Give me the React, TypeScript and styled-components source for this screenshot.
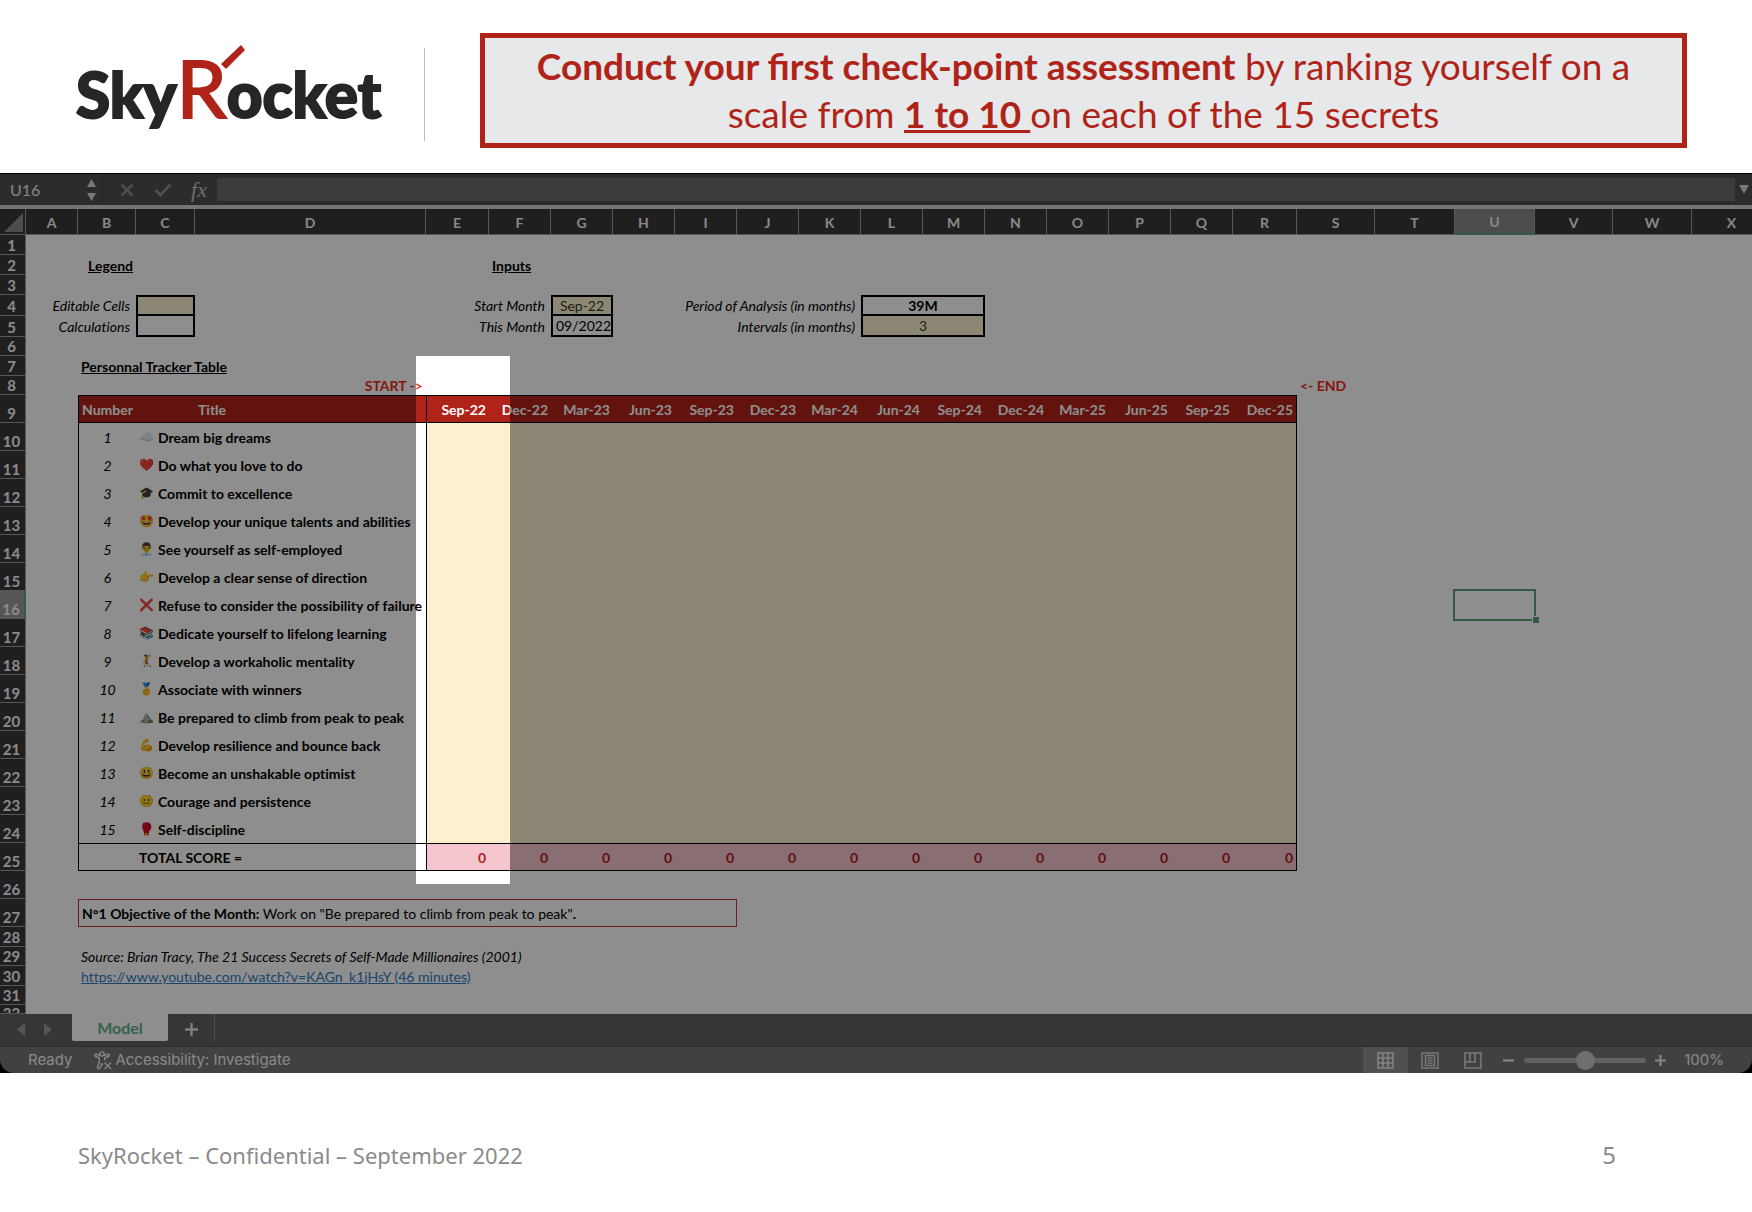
import React from "react";
import styled, { createGlobalStyle, css } from "styled-components";

const color = {
  brand: "#b02318",
  ink: "#262626",
  cream: "#fcf0d0",
  pink: "#f6c6cf",
  alert: "#f0281e",
  gutter: "#383838",
  rule: "#9c9c9c",
  green: "#5f9f7b",
  chrome: "#4f4f4f",
};

const calibri = `Lato, Carlito, "Noto Sans", sans-serif`;
const system = `Inter, "Liberation Sans", sans-serif`;

const GlobalStyle = createGlobalStyle`
  *, *::before, *::after { box-sizing: border-box; }
  body { margin: 0; background: #fff; font-family: ${calibri}; color: #000; }
  button, input { font: inherit; color: inherit; }
  button { border: 0; padding: 0; background: none; cursor: pointer; }
`;

/* ---------- slide header ---------- */

const SlideHeader = styled.header`
  display: flex;
  align-items: center;
  padding: 33px 65px 25px 76px;
`;

const Logo = styled.div`
  position: relative;
  display: flex;
  align-items: baseline;
  flex: none;
  width: 300px;
  font-size: 62px;
  line-height: 86px;
  font-weight: 900;
  color: ${color.ink};
  -webkit-text-stroke: 2px ${color.ink};
`;

const LogoInitial = styled.span`
  font-size: 80px;
  font-weight: 400;
  color: ${color.brand};
  -webkit-text-stroke: 2px ${color.brand};
`;

const Spark = styled.svg`
  position: absolute;
  left: 144px;
  top: 0;
`;

const Divider = styled.div`
  flex: none;
  width: 1px;
  height: 93px;
  margin: 8px 55px 0 48px;
  background: #bdbdbd;
`;

const Callout = styled.h1`
  flex: 1;
  margin: 0;
  padding: 4px 30px 5px;
  border: 5px solid ${color.brand};
  background: #e6e8ea;
  color: ${color.brand};
  font-size: 37px;
  line-height: 48px;
  font-weight: 400;
  text-align: center;
`;

/* ---------- workbook chrome ---------- */

const Workbook = styled.main`
  position: relative;
  overflow: hidden;
  background: #000;
  border-top: 1px solid #000;
`;

const Spotlight = styled.div`
  position: absolute;
  top: 182px;
  left: 416px;
  width: 94px;
  height: 528px;
  box-shadow: 0 0 0 4000px rgba(0, 0, 0, 0.443);
  pointer-events: none;
`;

const FormulaBar = styled.div`
  display: flex;
  align-items: center;
  height: 31px;
  background: ${color.chrome};
  color: #f0f0f0;
`;

const NameBox = styled.input`
  width: 72px;
  height: 24px;
  padding: 0 0 0 10px;
  border: 0;
  background: none;
  font-size: 16px;
  outline: none;
`;

const Stepper = styled.div`
  display: grid;
  gap: 6px;
  width: 30px;
  justify-items: center;
  padding-left: 8px;
`;

const IconButton = styled.button<{ $width?: number }>`
  display: flex;
  align-items: center;
  justify-content: center;
  width: ${(p) => p.$width ?? 36}px;
`;

const BarTools = styled.div`
  display: flex;
  align-items: center;
  height: 31px;
  padding-left: 6px;
  border-left: 1px solid #404040;
`;

const FxButton = styled(IconButton)`
  font-family: "Liberation Serif", serif;
  font-style: italic;
  font-size: 22px;
  line-height: 24px;
  color: #c4c4c4;
`;

const FormulaInput = styled.input`
  flex: 1;
  min-width: 0;
  height: 23px;
  border: 0;
  border-radius: 3px 0 0 3px;
  background: #6c6c6c;
  outline: none;
`;

/* ---------- grid ---------- */

const GridFrame = styled.div`
  overflow: hidden;
  border-top: 4px solid #d0d0d0;
  background: #fff;
`;

const Grid = styled.table`
  width: calc(100% + 20px);
  table-layout: fixed;
  border-collapse: separate;
  border-spacing: 0;
  font-size: 14px;
  line-height: 17px;
  font-variant-ligatures: none;
`;

const ColHead = styled.th<{ $active?: boolean }>`
  height: 26px;
  padding: 1px 0 0;
  background: ${(p) => (p.$active ? "#8a8a8a" : color.gutter)};
  border-right: 1px solid ${color.rule};
  border-bottom: ${(p) => (p.$active ? `2px solid ${color.green}` : `1px solid ${color.rule}`)};
  color: #f4f4f4;
  font-weight: 700;
`;

const Corner = styled.td`
  padding: 0 2px 2px 4px;
  background: ${color.gutter};
  border-right: 1px solid ${color.rule};
  border-bottom: 1px solid ${color.rule};
  vertical-align: bottom;
  svg { display: block; }
`;

const RowHead = styled.th<{ $active?: boolean }>`
  padding: 0 2px 0 0;
  background: ${(p) => (p.$active ? "#9a9a9a" : color.gutter)};
  border-right: ${(p) => (p.$active ? `2px solid ${color.green}` : `1px solid ${color.rule}`)};
  border-bottom: 1px solid ${color.rule};
  color: #f8f8f8;
  font-size: 15px;
  font-weight: 700;
  vertical-align: bottom;
`;

const Clip = styled.div<{ $height: number }>`
  height: ${(p) => p.$height - 1}px;
  overflow: hidden;
  display: flex;
  align-items: ${(p) => (p.$height < 18 ? "flex-start" : "flex-end")};
  justify-content: center;
`;

type Look =
  | "plain" | "heading" | "label" | "editable" | "calc" | "marker" | "band"
  | "number" | "title" | "score" | "totalLabel" | "total" | "objective" | "selected";

const looks: Record<Look, ReturnType<typeof css>> = {
  plain: css``,
  heading: css`font-weight: 700; text-decoration: underline;`,
  label: css`font-style: italic; padding-right: 6px;`,
  editable: css`background: ${color.cream}; border: 2px solid #000; color: #3a3a20;`,
  calc: css`border: 2px solid #000;`,
  marker: css`font-weight: 700; color: ${color.alert};`,
  band: css`
    background: ${color.brand};
    color: #fff;
    font-weight: 700;
    border-top: 1px solid #000;
    border-bottom: 1px solid #000;
  `,
  number: css`font-style: italic;`,
  title: css`font-weight: 700;`,
  score: css`background: ${color.cream};`,
  totalLabel: css`font-weight: 700; border-top: 1px solid #000; border-bottom: 1px solid #000;`,
  total: css`
    background: ${color.pink};
    color: ${color.brand};
    font-weight: 700;
    border-top: 1px solid #000;
    border-bottom: 1px solid #000;
  `,
  objective: css`border: 1px solid #c8323c;`,
  selected: css`
    position: relative;
    &::before {
      content: "";
      position: absolute;
      inset: -2px -1px -2px -2px;
      border: 2px solid ${color.green};
    }
    &::after {
      content: "";
      position: absolute;
      right: -4px;
      bottom: -4px;
      width: 6px;
      height: 6px;
      background: ${color.green};
      outline: 1px solid #fff;
    }
  `,
};

const Cell = styled.td<{ $look: Look; $align?: string; $left?: boolean; $right?: boolean; $joined?: boolean }>`
  padding: 0 3px;
  text-align: ${(p) => p.$align ?? "left"};
  white-space: nowrap;
  ${(p) => looks[p.$look]}
  ${(p) => p.$left && css`border-left: 1px solid #000;`}
  ${(p) => p.$right && css`border-right: 1px solid #000;`}
  ${(p) => p.$joined && css`border-top: 0;`}
`;

const Emoji = styled.span`
  display: inline-block;
  width: 19px;
  font-family: "Noto Color Emoji", sans-serif;
  font-size: 12px;
  line-height: 14px;
  font-weight: 400;
  vertical-align: 2px;
`;

const SourceLink = styled.a`
  color: #2f7cc4;
`;

/* ---------- sheet tabs and status bar ---------- */

const TabBar = styled.div`
  display: flex;
  align-items: flex-start;
  height: 32px;
  padding-left: 7px;
  background: #616161;
  color: #d0d0d0;
`;

const TabTool = styled(IconButton)`
  height: 30px;
`;

const SheetTab = styled.button`
  width: 96px;
  height: 27px;
  margin-left: 11px;
  background: #fff;
  border-radius: 0 0 2px 2px;
  color: #62b181;
  font-size: 16px;
  font-weight: 700;
`;

const TabEnd = styled.div`
  width: 1px;
  height: 27px;
  background: #8e8e8e;
`;

const StatusBar = styled.div`
  display: flex;
  align-items: center;
  height: 27px;
  padding: 0 28px;
  border-top: 1px solid #505050;
  border-radius: 0 0 14px 14px;
  background: #767676;
  color: #f4f4f4;
  font-family: ${system};
  font-size: 15px;
  line-height: 24px;
`;

const Accessibility = styled.button`
  display: flex;
  align-items: center;
  gap: 2px;
  margin-left: 22px;
`;

const StatusTools = styled.div`
  display: flex;
  align-items: center;
  margin-left: auto;
`;

const ViewButton = styled(IconButton)<{ $active?: boolean }>`
  height: 26px;
  background: ${(p) => (p.$active ? "#919191" : "none")};
`;

const ZoomSlider = styled.input`
  appearance: none;
  width: 122px;
  height: 20px;
  margin: 0 2px;
  background: none;
  &::-webkit-slider-runnable-track {
    height: 5px;
    border-radius: 3px;
    background: #aeaeae;
  }
  &::-webkit-slider-thumb {
    appearance: none;
    width: 19px;
    height: 19px;
    margin-top: -7px;
    border-radius: 50%;
    background: #c8c8c8;
  }
`;

const ZoomValue = styled.output`
  width: 52px;
  font-size: 15px;
  text-align: right;
`;

const SlideFooter = styled.footer`
  display: flex;
  justify-content: space-between;
  align-items: center;
  padding: 65px 136px 36px 78px;
  font-family: "Noto Sans", "Open Sans", sans-serif;
  font-size: 22px;
  line-height: 34px;
  color: #8a8a8a;
`;

const PageNumber = styled.span`
  font-size: 24px;
`;

/* ---------- data ---------- */

const columns = "ABCDEFGHIJKLMNOPQRSTUVWX".split("");
const columnWidths = [
  52, 58, 59, 231, 63, 62, 62, 62, 62, 62, 62, 62, 62, 62, 62, 62, 62, 64, 78, 80, 80, 78, 79,
];

const secrets: [string, string][] = [
  ["☁️", "Dream big dreams"],
  ["❤️", "Do what you love to do"],
  ["🎓", "Commit to excellence"],
  ["🤩", "Develop your unique talents and abilities"],
  ["👨‍💼", "See yourself as self-employed"],
  ["👉", "Develop a clear sense of direction"],
  ["❌", "Refuse to consider the possibility of failure"],
  ["📚", "Dedicate yourself to lifelong learning"],
  ["🤾", "Develop a workaholic mentality"],
  ["🥇", "Associate with winners"],
  ["⛰️", "Be prepared to climb from peak to peak"],
  ["💪", "Develop resilience and bounce back"],
  ["😃", "Become an unshakable optimist"],
  ["😐", "Courage and persistence"],
  ["🥊", "Self-discipline"],
];

const months = [
  "Sep-22", "Dec-22", "Mar-23", "Jun-23", "Sep-23", "Dec-23", "Mar-24",
  "Jun-24", "Sep-24", "Dec-24", "Mar-25", "Jun-25", "Sep-25", "Dec-25",
];

type CellSpec = {
  at: string;
  span?: number;
  look?: Look;
  align?: string;
  left?: boolean;
  right?: boolean;
  joined?: boolean;
  body?: React.ReactNode;
};

const monthCells = (look: Look, value: (i: number) => React.ReactNode): CellSpec[] =>
  months.map((_, i) => ({
    at: columns[4 + i],
    look,
    align: "right",
    left: i === 0,
    right: i === months.length - 1,
    body: value(i),
  }));

type RowSpec = { height: number; cells?: CellSpec[] };

const rows: RowSpec[] = [
  { height: 20 },
  {
    height: 20,
    cells: [
      { at: "B", look: "heading", align: "right", body: "Legend" },
      { at: "F", look: "heading", body: "Inputs" },
    ],
  },
  { height: 20 },
  {
    height: 21,
    cells: [
      { at: "A", span: 2, look: "label", align: "right", body: "Editable Cells" },
      { at: "C", look: "editable" },
      { at: "E", span: 2, look: "label", align: "right", body: "Start Month" },
      { at: "G", look: "editable", align: "center", body: "Sep-22" },
      { at: "H", span: 4, look: "label", align: "right", body: "Period of Analysis (in months)" },
      { at: "L", span: 2, look: "calc", align: "center", body: <strong>39M</strong> },
    ],
  },
  {
    height: 21,
    cells: [
      { at: "A", span: 2, look: "label", align: "right", body: "Calculations" },
      { at: "C", look: "calc", joined: true },
      { at: "E", span: 2, look: "label", align: "right", body: "This Month" },
      { at: "G", look: "calc", align: "center", joined: true, body: "09/2022" },
      { at: "H", span: 4, look: "label", align: "right", body: "Intervals (in months)" },
      { at: "L", span: 2, look: "editable", align: "center", joined: true, body: "3" },
    ],
  },
  { height: 19 },
  { height: 20, cells: [{ at: "B", span: 3, look: "heading", body: "Personnal Tracker Table" }] },
  {
    height: 19,
    cells: [
      { at: "D", look: "marker", align: "right", body: "START ->" },
      { at: "S", look: "marker", body: "<- END" },
    ],
  },
  {
    height: 28,
    cells: [
      { at: "B", look: "band", align: "center", left: true, body: "Number" },
      { at: "C", look: "band" },
      { at: "D", look: "band", body: "Title" },
      ...monthCells("band", (i) => months[i]),
    ],
  },
  ...secrets.map(([icon, title], n): RowSpec => ({
    height: 28,
    cells: [
      { at: "B", look: "number", align: "center", left: true, body: n + 1 },
      { at: "C", span: 2, look: "title", body: <><Emoji>{icon}</Emoji>{title}</> },
      ...monthCells("score", () => null),
      ...(n === 6 ? [{ at: "U", look: "selected" as Look }] : []),
    ],
  })),
  {
    height: 28,
    cells: [
      { at: "B", look: "totalLabel", left: true },
      { at: "C", span: 2, look: "totalLabel", body: "TOTAL SCORE =" },
      ...monthCells("total", () => 0),
    ],
  },
  { height: 28 },
  {
    height: 28,
    cells: [
      {
        at: "B",
        span: 8,
        look: "objective",
        body: (
          <>
            <strong>N°1 Objective of the Month:</strong> Work on "Be prepared to climb from peak to peak"
            <strong>.</strong>
          </>
        ),
      },
    ],
  },
  { height: 20 },
  {
    height: 19,
    cells: [
      {
        at: "B",
        span: 8,
        look: "number",
        body: "Source: Brian Tracy, The 21 Success Secrets of Self-Made Millionaires (2001)",
      },
    ],
  },
  {
    height: 20,
    cells: [
      {
        at: "B",
        span: 8,
        body: (
          <SourceLink href="https://www.youtube.com/watch?v=KAGn_k1jHsY">
            https://www.youtube.com/watch?v=KAGn_k1jHsY (46 minutes)
          </SourceLink>
        ),
      },
    ],
  },
  { height: 19 },
  { height: 9 },
];

/* ---------- pieces ---------- */

function SheetRow({ number, row }: { number: number; row: RowSpec }) {
  const out: React.ReactNode[] = [];
  let next = 0;
  const fill = (to: number) => {
    if (to > next) out.push(<Cell key={`gap${next}`} $look="plain" colSpan={to - next} />);
  };
  for (const c of row.cells ?? []) {
    const start = columns.indexOf(c.at);
    fill(start);
    out.push(
      <Cell
        key={c.at}
        colSpan={c.span ?? 1}
        $look={c.look ?? "plain"}
        $align={c.align}
        $left={c.left}
        $right={c.right}
        $joined={c.joined}
      >
        {c.body}
      </Cell>
    );
    next = start + (c.span ?? 1);
  }
  fill(columns.length);
  return (
    <tr style={{ height: row.height }}>
      <RowHead scope="row" $active={number === 16}>
        <Clip $height={row.height}>{number}</Clip>
      </RowHead>
      {out}
    </tr>
  );
}

function Triangle({ dir, size = 9, fill = "#d8d8d8" }: { dir: "up" | "down" | "left" | "right"; size?: number; fill?: string }) {
  const points = { up: "5,0 10,10 0,10", down: "0,0 10,0 5,10", left: "10,0 10,10 0,5", right: "0,0 10,5 0,10" }[dir];
  const tall = dir === "left" || dir === "right";
  return (
    <svg
      width={tall ? size - 1 : size}
      height={tall ? size + 4 : size - 1}
      viewBox="0 0 10 10"
      preserveAspectRatio="none"
      aria-hidden="true"
    >
      <polygon points={points} fill={fill} />
    </svg>
  );
}

export default function App() {
  return (
    <>
      <GlobalStyle />
      <SlideHeader>
        <Logo>
          <span>Sky</span>
          <LogoInitial>R</LogoInitial>
          <span>ocket</span>
          <Spark width="28" height="28" viewBox="0 0 28 28" aria-hidden="true">
            <polygon points="1,20 6,25 25,6 21,1" fill={color.brand} />
          </Spark>
        </Logo>
        <Divider />
        <Callout>
          <strong>Conduct your first check-point assessment</strong> by ranking yourself on a scale from{" "}
          <strong><u>1 to 10 </u></strong>on each of the 15 secrets
        </Callout>
      </SlideHeader>

      <Workbook>
        <FormulaBar>
          <NameBox aria-label="Name box" defaultValue="U16" />
          <Stepper>
            <Triangle dir="up" />
            <Triangle dir="down" />
          </Stepper>
          <BarTools>
            <IconButton aria-label="Cancel">
              <svg width="14" height="14" viewBox="0 0 14 14" stroke="#8c8c8c" strokeWidth="2.6">
                <path d="M1.5 1.5l11 11M12.5 1.5l-11 11" />
              </svg>
            </IconButton>
            <IconButton aria-label="Enter">
              <svg width="18" height="14" viewBox="0 0 18 14" fill="none" stroke="#8c8c8c" strokeWidth="3">
                <path d="M1.5 7l5 5L16.5 1.5" />
              </svg>
            </IconButton>
            <FxButton aria-label="Insert function">fx</FxButton>
          </BarTools>
          <FormulaInput aria-label="Formula" />
          <IconButton $width={17} aria-label="Expand formula bar">
            <Triangle dir="down" size={10} />
          </IconButton>
        </FormulaBar>

        <GridFrame>
          <Grid>
            <colgroup>
              <col width={26} />
              {columnWidths.map((w, i) => <col key={i} width={w} />)}
              <col />
            </colgroup>
            <thead>
              <tr>
                <Corner>
                  <svg width="19" height="19" viewBox="0 0 19 19" aria-hidden="true">
                    <polygon points="19,0 19,19 0,19" fill="#8a8a8a" />
                  </svg>
                </Corner>
                {columns.map((c) => <ColHead key={c} scope="col" $active={c === "U"}>{c}</ColHead>)}
              </tr>
            </thead>
            <tbody>
              {rows.map((row, i) => <SheetRow key={i} number={i + 1} row={row} />)}
            </tbody>
          </Grid>
        </GridFrame>

        <TabBar>
          <TabTool $width={27} aria-label="Previous sheet"><Triangle dir="left" fill="#9a9a9a" /></TabTool>
          <TabTool $width={27} aria-label="Next sheet"><Triangle dir="right" fill="#9a9a9a" /></TabTool>
          <SheetTab>Model</SheetTab>
          <TabTool $width={46} aria-label="Add sheet">
            <svg width="13" height="13" viewBox="0 0 13 13" stroke="#e4e4e4" strokeWidth="2.4">
              <path d="M6.5 0v13M0 6.5h13" />
            </svg>
          </TabTool>
          <TabEnd />
        </TabBar>

        <StatusBar>
          <span>Ready</span>
          <Accessibility>
            <svg width="19" height="19" viewBox="0 0 19 19" fill="none" stroke="#f0f0f0" strokeWidth="1.4" strokeLinejoin="round" aria-hidden="true">
              <circle cx="8" cy="3" r="2.1" />
              <path d="M6 4.5L2.3 3.2C.6 3 .4 5 1.7 5.5L5.3 7v3.5L3.5 16c-.3 1.8 1.7 2.4 2.4 1l2-4.5.9 1.5M10 4.5l3.7-1.3c1.7-.2 1.9 1.8.6 2.3L10.7 7v2.5" />
              <path d="M10.5 11.5l6.5 6.5M17 11.5L10.5 18" />
            </svg>
            Accessibility: Investigate
          </Accessibility>
          <StatusTools>
            <ViewButton $width={45} $active aria-label="Normal view">
              <svg width="17" height="17" viewBox="0 0 17 17" fill="none" stroke="#e8e8e8" strokeWidth="1.6">
                <path d="M1 1h15v15H1zM6 1v15M11 1v15M1 6h15M1 11h15" />
              </svg>
            </ViewButton>
            <ViewButton $width={43} aria-label="Page layout view">
              <svg width="18" height="17" viewBox="0 0 18 17" fill="none" stroke="#d8d8d8" strokeWidth="1.5">
                <path d="M1 1h16v15H1zM4.5 3.5h9v10h-9zM6.5 6h5M6.5 8.5h5M6.5 11h5" />
              </svg>
            </ViewButton>
            <ViewButton $width={43} aria-label="Page break view">
              <svg width="18" height="17" viewBox="0 0 18 17" fill="none" stroke="#d8d8d8" strokeWidth="1.6">
                <path d="M1 1h16v15H1zM1 10h10V1M6 1v9" />
              </svg>
            </ViewButton>
            <IconButton $width={28} aria-label="Zoom out">
              <svg width="11" height="11" viewBox="0 0 11 11" stroke="#f0f0f0" strokeWidth="2.2"><path d="M0 5.5h11" /></svg>
            </IconButton>
            <ZoomSlider type="range" aria-label="Zoom" min={0} max={200} defaultValue={100} />
            <IconButton $width={24} aria-label="Zoom in">
              <svg width="11" height="11" viewBox="0 0 11 11" stroke="#f0f0f0" strokeWidth="2.2"><path d="M0 5.5h11M5.5 0v11" /></svg>
            </IconButton>
            <ZoomValue>100%</ZoomValue>
          </StatusTools>
        </StatusBar>
        <Spotlight />
      </Workbook>

      <SlideFooter>
        <span>SkyRocket – Confidential – September 2022</span>
        <PageNumber>5</PageNumber>
      </SlideFooter>
    </>
  );
}
